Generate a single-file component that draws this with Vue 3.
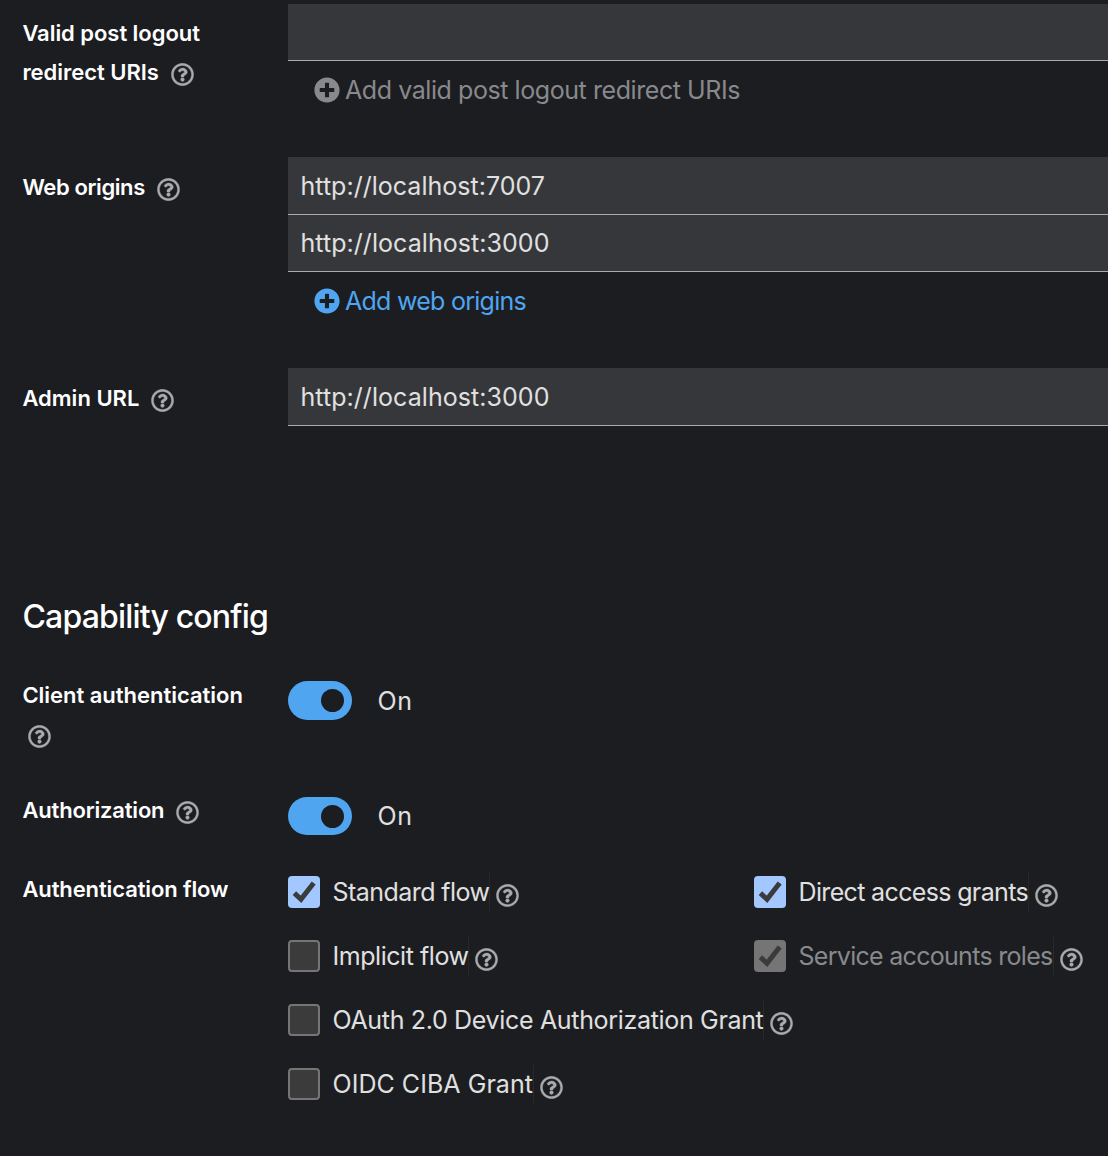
<script setup>
import { h } from 'vue'

const HELP = 'M256 8C119.043 8 8 119.083 8 256c0 136.997 111.043 248 248 248s248-111.003 248-248C504 119.083 392.957 8 256 8zm0 448c-110.532 0-200-89.431-200-200 0-110.495 89.472-200 200-200 110.491 0 200 89.471 200 200 0 110.53-89.431 200-200 200zm107.244-255.2c0 67.052-72.421 68.084-72.421 92.863V300c0 6.627-5.373 12-12 12h-45.647c-6.627 0-12-5.373-12-12v-8.659c0-35.745 27.1-50.034 47.579-61.516 17.561-9.845 28.324-16.541 28.324-29.579 0-17.246-21.999-28.693-39.784-28.693-23.189 0-33.894 10.977-48.942 29.969-4.057 5.12-11.46 6.071-16.666 2.124l-27.824-21.098c-5.107-3.872-6.251-11.066-2.644-16.363C184.846 131.491 214.94 112 261.794 112c49.071 0 101.45 38.304 101.45 88.8zM298 368c0 23.159-18.841 42-42 42s-42-18.841-42-42 18.841-42 42-42 42 18.841 42 42z'
const PLUS = 'M256 8C119 8 8 119 8 256s111 248 248 248 248-111 248-248S393 8 256 8zm144 276c0 6.6-5.4 12-12 12h-92v92c0 6.6-5.4 12-12 12h-56c-6.6 0-12-5.4-12-12v-92h-92c-6.6 0-12-5.4-12-12v-56c0-6.6 5.4-12 12-12h92v-92c0-6.6 5.4-12 12-12h56c6.6 0 12 5.4 12 12v92h92c6.6 0 12 5.4 12 12v56z'

const Icon = (props) =>
  h('svg', { viewBox: '0 0 512 512', fill: 'currentColor', 'aria-hidden': 'true' }, [h('path', { d: props.d })])
Icon.props = ['d']

// Tracks a piece of text out or in until it takes up the given width.
const vFit = {
  mounted(el, { value }) {
    const natural = el.getBoundingClientRect().width
    el.style.letterSpacing = `${(value - natural) / el.textContent.length}px`
  },
}

const urlFields = [
  {
    id: 'logout',
    lines: [['Valid post logout', 177.5], ['redirect URIs', 136.5]],
    values: [['', 0]],
    add: ['Add valid post logout redirect URIs', 395],
    disabled: true,
  },
  {
    id: 'origins',
    lines: [['Web origins', 122.5]],
    values: [['http://localhost:7007', 244.5], ['http://localhost:3000', 249]],
    add: ['Add web origins', 181],
  },
  {
    id: 'admin',
    lines: [['Admin URL', 117]],
    values: [['http://localhost:3000', 249]],
  },
]

const switches = [
  { id: 'client', text: 'Client authentication', width: 220.5, wrap: true },
  { id: 'authorization', text: 'Authorization', width: 142, wrap: false },
]

const flows = [
  { text: 'Standard flow', width: 157, checked: true },
  { text: 'Direct access grants', width: 229.5, checked: true },
  { text: 'Implicit flow', width: 136, checked: false },
  { text: 'Service accounts roles', width: 254, checked: true, disabled: true },
  { text: 'OAuth 2.0 Device Authorization Grant', width: 431, checked: false, wide: true },
  { text: 'OIDC CIBA Grant', width: 200.5, checked: false, wide: true },
]
</script>

<template>
  <main class="page">
    <section v-for="f in urlFields" :key="f.id" class="row" :class="f.id">
      <div class="label">
        <div v-for="([text, width], i) in f.lines" :key="text" class="line">
          <span v-fit="width" class="label-text">{{ text }}</span>
          <Icon v-if="i === f.lines.length - 1" class="help" :d="HELP" />
        </div>
      </div>
      <div class="control">
        <div v-for="[text, width] in f.values" :key="text" class="input">
          <span v-if="text" v-fit="width" class="text">{{ text }}</span>
        </div>
        <div v-if="f.add" class="add" :class="{ disabled: f.disabled }">
          <Icon class="plus" :d="PLUS" />
          <span v-fit="f.add[1]" class="text">{{ f.add[0] }}</span>
        </div>
      </div>
    </section>

    <h1 class="heading"><span v-fit="245.5" class="text">Capability config</span></h1>

    <section v-for="s in switches" :key="s.id" class="row" :class="s.id">
      <div class="label">
        <div class="line">
          <span v-fit="s.width" class="label-text">{{ s.text }}</span>
          <Icon v-if="!s.wrap" class="help" :d="HELP" />
        </div>
        <div v-if="s.wrap" class="line"><Icon class="help" :d="HELP" /></div>
      </div>
      <div class="switch">
        <span class="track"><span class="knob"></span></span>
        <span v-fit="35" class="text">On</span>
      </div>
    </section>

    <section class="row flows">
      <div class="label">
        <div class="line"><span v-fit="206" class="label-text">Authentication flow</span></div>
      </div>
      <div class="options">
        <div v-for="o in flows" :key="o.text" class="option" :class="{ wide: o.wide, disabled: o.disabled }">
          <span class="box" :class="{ checked: o.checked }">
            <svg v-if="o.checked" viewBox="0 0 32 32"><path d="M6.4 17.2 13 23.3 25.7 7" /></svg>
          </span>
          <span class="option-label"><span v-fit="o.width" class="text">{{ o.text }}</span></span>
          <Icon class="help" :d="HELP" />
        </div>
      </div>
    </section>
  </main>
</template>

<style>
body {
  margin: 0;
  background: #1c1d21;
}
</style>

<style scoped>
.page {
  box-sizing: border-box;
  height: 1156px;
  padding: 4px 0 0 22.4px;
  overflow: hidden;
  background: #1c1d21;
  color: #e0e0e0;
  font-family: Inter, "Liberation Sans", sans-serif;
  font-size: 25px;
}
.row {
  display: grid;
  grid-template-columns: 265.6px 1fr;
  align-items: start;
}
.logout { height: 153px; }
.origins { height: 211px; }
.admin { height: 212px; }
.client { height: 116px; }
.authorization { height: 76px; }

.text,
.label-text {
  display: inline-block;
  white-space: nowrap;
}
.label {
  padding-top: 11px;
  color: #fff;
  font-size: 22px;
  font-weight: 600;
}
.logout .label { padding-top: 10px; }
.line {
  display: flex;
  align-items: center;
  height: 39px;
  line-height: 39px;
}
.label-text { margin-right: 6px; }
.help {
  flex: none;
  width: 23px;
  height: 23px;
  color: #a9abad;
  stroke: currentColor;
  stroke-width: 8;
}
.line .help {
  margin: 4px 0 0 6px;
}

.input {
  box-sizing: border-box;
  height: 57px;
  padding-left: 12.5px;
  border-bottom: 1px solid #aaabac;
  background: #36373a;
  line-height: 56px;
}
.origins .input:first-child,
.admin .input {
  height: 58px;
  line-height: 58px;
}
.add {
  display: flex;
  align-items: center;
  height: 58px;
  padding-left: 26px;
  color: #4fa5f0;
}
.add.disabled { color: #88898c; }
.plus {
  width: 26px;
  height: 26px;
  margin-right: 5px;
}
.add .text { margin-top: -1px; }

.heading {
  height: 98px;
  margin: 0;
  padding-top: 18px;
  box-sizing: border-box;
  color: #fff;
  font-size: 32px;
  font-weight: 500;
  line-height: 38px;
}

.client .label,
.authorization .label { padding-top: 0; }
.client .label { margin-top: -2px; }
.authorization .label { margin-top: -3px; }
.switch {
  display: flex;
  align-items: center;
  height: 48px;
}
.client .switch {
  height: 47px;
  margin-top: -1px;
}
.authorization .switch { margin-top: -2px; }
.track {
  display: flex;
  align-items: center;
  justify-content: flex-end;
  box-sizing: border-box;
  width: 64px;
  height: 38px;
  margin-right: 25.5px;
  padding-right: 8px;
  border-radius: 20px;
  background: #4fa5f0;
}
.client .track { height: 39px; }
.knob {
  width: 23px;
  height: 23px;
  border-radius: 50%;
  background: #1c1d21;
}

.flows .label { padding-top: 0; }
.options {
  display: grid;
  grid-template-columns: 466px 1fr;
  grid-auto-rows: 64px;
  margin-top: 3px;
}
.option {
  display: flex;
  align-items: center;
  height: 38px;
}
.option.wide { grid-column: 1 / -1; }
.box {
  box-sizing: border-box;
  flex: none;
  width: 32px;
  height: 32px;
  border: 2px solid #757575;
  border-radius: 4px;
  background: #3b3b3b;
}
.box.checked {
  border: 0;
  background: #a3c7ff;
}
.disabled .box.checked { background: #757575; }
.box svg {
  display: block;
  fill: none;
  stroke: #3b3b3b;
  stroke-width: 5;
}
.option-label {
  height: 38px;
  margin-left: 12.5px;
  border-right: 1px solid #27292d;
  line-height: 38px;
}
.option.disabled .option-label { color: #88898c; }
.option .help { margin: 6px 0 0 6px; }
</style>
